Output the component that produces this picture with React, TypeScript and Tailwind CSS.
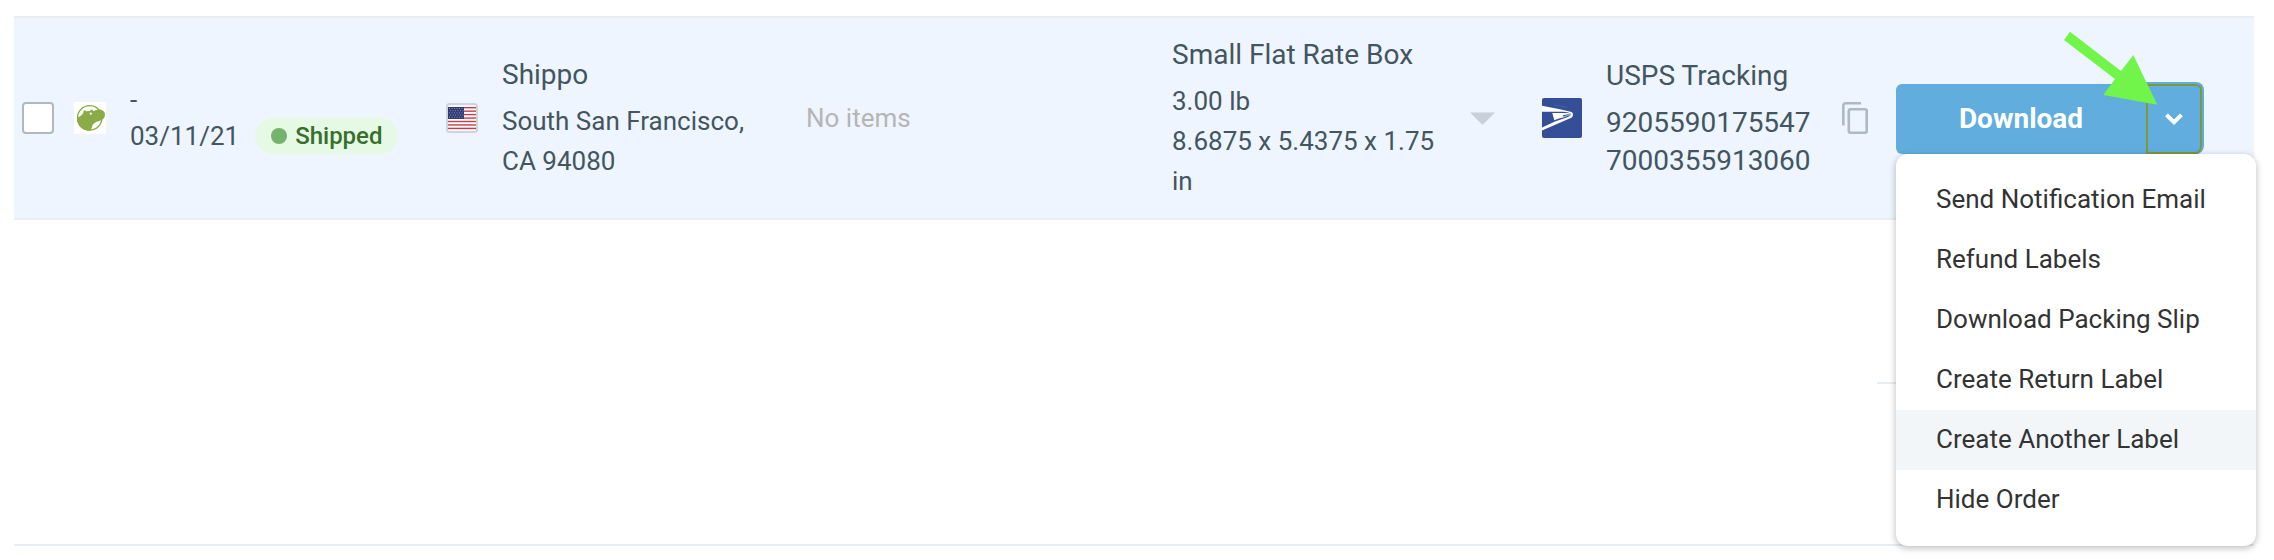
import React from "react";

const menuItems = [
  "Send Notification Email",
  "Refund Labels",
  "Download Packing Slip",
  "Create Return Label",
  "Create Another Label",
  "Hide Order",
];

function StoreLogo() {
  return (
    <svg className="size-8 bg-white" viewBox="0 0 32 32" aria-hidden="true">
      <circle cx="15.7" cy="15.9" r="12.2" fill="#fff" stroke="#8aab45" strokeWidth="1.3" />
      <path
        fill="#8aab45"
        d="M3 15.5 C6 15 8.5 13 9.3 10.6 L9.8 8.6 L11.4 8.3 L12.4 9.4 C13.8 8.9 15 8.9 16 9 L16.8 7.6 L18.6 7.8 L19.2 9.2 C21.5 8 24.5 7.2 27 7.7 C29.6 8.2 31 10.4 31 12.8 C31 15.6 29.4 17.4 26.6 18.6 C23.4 19.7 20.6 20.4 19 22.6 C17.6 24.6 18 26.6 16.4 28.7 C8.4 29.2 2.8 23.6 3 15.5 Z"
      />
      <circle cx="16.8" cy="11.7" r="1.1" fill="#fff" />
    </svg>
  );
}

function UsFlag() {
  const stripes = [0, 1, 2, 3, 4, 5, 6];
  const stars = [0, 1, 2, 3, 4];
  return (
    <svg className="h-[30px] w-8" viewBox="0 0 32 30" role="img" aria-label="United States">
      <rect x="1" y="1" width="30" height="28" rx="2.5" fill="#f3f6fb" stroke="#ccd5d9" strokeWidth="2" />
      <rect x="2" y="4" width="28" height="22" fill="#fff" />
      {stripes.map((i) => (
        <rect key={i} x="2" y={4 + i * 3.45} width="28" height="1.4" fill="#c23f45" />
      ))}
      <rect x="2" y="4" width="16" height="12" fill="#2f3a72" />
      {stars.map((r) =>
        [0, 1, 2, 3, 4, 5].map((c) => (
          <rect key={`${r}-${c}`} x={3 + c * 2.5 + (r % 2)} y={5 + r * 2.2} width="1" height="1" fill="#8990b8" />
        ))
      )}
    </svg>
  );
}

function UspsLogo() {
  return (
    <svg className="size-10" viewBox="0 0 40 40" role="img" aria-label="USPS">
      <rect width="40" height="40" rx="2" fill="#354e98" />
      <path d="M12 7 L24 9" stroke="#5c71ae" strokeWidth="0.5" />
      <path
        fill="#fff"
        d="M0 7.8 L18 11.2 L28.5 13.8 C30.5 14.2 31.3 15.4 31 17.2 C30.7 19 29 20 27 20.8 L0 32.4 L0 29.4 L13 23.6 L26 18.9 L29 17.2 L22 17.8 L29.4 16.2 C28 14.6 25 14 21 13.8 L0 13.8 Z"
      />
      <path fill="#fff" d="M10.3 15 L24.5 15 C26.5 15 28 15.4 28.6 16 L21.5 16.9 L20.5 18.6 L25.5 18.2 C21 19.5 16.5 20.5 12.3 22.2 Z" />
    </svg>
  );
}

function CopyIcon() {
  return (
    <svg className="h-8 w-[26px]" viewBox="0 0 26 32" fill="none" stroke="#adbac0" strokeWidth="2.6" aria-hidden="true">
      <path d="M19 1.3 H4 Q1.3 1.3 1.3 4 V23.5" />
      <rect x="6.8" y="7.3" width="17.9" height="23.4" rx="1.6" />
    </svg>
  );
}

function Arrow() {
  return (
    <svg className="pointer-events-none absolute -top-[51px] left-[168px] h-[76px] w-24" viewBox="0 0 96 76" aria-hidden="true">
      <polygon fill="#72f54a" points="0,9 6,0.7 57,40 69.3,24 93.3,73.7 39.3,64 51,48" />
    </svg>
  );
}

function Actions() {
  return (
    <div className="relative flex w-[308px] items-end">
      <button className="h-[70px] flex-1 rounded-l-md bg-[#60adde] text-[28px] leading-10 font-bold text-white">
        Download
      </button>
      <button
        aria-label="More actions"
        aria-expanded="true"
        className="flex h-[72px] w-[58px] items-center justify-center rounded-r-lg border-t-2 border-r-2 border-[#60adde] bg-[#60adde] shadow-[inset_0_0_0_2px_#7d9a37]"
      >
        <svg className="h-3 w-[18px]" viewBox="0 0 18 12" fill="none" aria-hidden="true">
          <path d="M1.5 1.8 L9 9.2 L16.5 1.8" stroke="#fff" strokeWidth="4" />
        </svg>
      </button>
      <div
        role="menu"
        className="absolute top-full left-0 w-[360px] rounded-xl bg-white py-4 shadow-[0_2px_6px_1px_rgba(0,0,0,0.22)]"
      >
        {menuItems.map((label) => (
          <button
            key={label}
            role="menuitem"
            className={`block h-[60px] w-full px-10 pb-0.5 text-left text-[26px] leading-10 whitespace-nowrap text-[#333333] ${
              label === "Create Another Label" ? "bg-[#f3f6f9]" : "bg-transparent"
            }`}
          >
            {label}
          </button>
        ))}
      </div>
      <Arrow />
    </div>
  );
}

export default function App() {
  return (
    <main className="bg-white pt-4 pr-5 pb-3.5 pl-3.5 font-['Roboto',sans-serif] text-[#435560]">
      <div className="border-y-2 border-[#e8edf3] bg-[#eef5ff]">
        <table className="w-full table-fixed text-left text-[26px] leading-10">
          <colgroup>
            <col className="w-[60px]" />
            <col className="w-14" />
            <col className="w-[316px]" />
            <col className="w-14" />
            <col className="w-[304px]" />
            <col />
            <col className="w-[298px]" />
            <col className="w-[72px]" />
            <col className="w-16" />
            <col className="w-[236px]" />
            <col className="w-[54px]" />
            <col className="w-[358px]" />
          </colgroup>
          <tbody>
            <tr>
              <td className="pl-2">
                <input
                  type="checkbox"
                  aria-label="Select order"
                  className="block size-8 appearance-none rounded border-2 border-[#adbac2] bg-white"
                />
              </td>
              <td>
                <StoreLogo />
              </td>
              <td className="leading-9">
                <div>-</div>
                <div className="flex items-center gap-4">
                  <span>03/11/21</span>
                  <span className="flex h-9 items-center gap-2 rounded-full bg-[#e5f9e5] px-4 text-[24px] font-medium text-[#376f2b]">
                    <span className="size-4 rounded-full bg-[#74b36b]" />
                    Shipped
                  </span>
                </div>
              </td>
              <td>
                <UsFlag />
              </td>
              <td className="pr-10">
                <div className="mb-1.5 text-[28px] leading-10">Shippo</div>
                <div>South San Francisco, CA 94080</div>
              </td>
              <td className="text-[#b5b5b5]">No items</td>
              <td className="py-[17px] pr-6">
                <div className="mb-1.5 text-[28px] leading-10">Small Flat Rate Box</div>
                <div>3.00 lb</div>
                <div>8.6875 x 5.4375 x 1.75 in</div>
              </td>
              <td>
                <button aria-label="Show package details" className="block">
                  <svg className="h-[13px] w-[25px]" viewBox="0 0 25 13" aria-hidden="true">
                    <polygon points="0,0.5 25,0.5 12.5,13" fill="#c9d0da" />
                  </svg>
                </button>
              </td>
              <td>
                <UspsLogo />
              </td>
              <td className="pr-6 text-[28px]">
                <div className="mb-2 leading-10">USPS Tracking</div>
                <div className="leading-[38px] break-all">92055901755477000355913060</div>
              </td>
              <td>
                <button aria-label="Copy tracking number" className="block">
                  <CopyIcon />
                </button>
              </td>
              <td>
                <Actions />
              </td>
            </tr>
          </tbody>
        </table>
      </div>
      <div className="flex flex-col items-end border-b-2 border-[#e8edf1] pt-[162px] pb-40">
        <div className="w-[377px] border-t-2 border-[#e8edf1]" />
      </div>
    </main>
  );
}
